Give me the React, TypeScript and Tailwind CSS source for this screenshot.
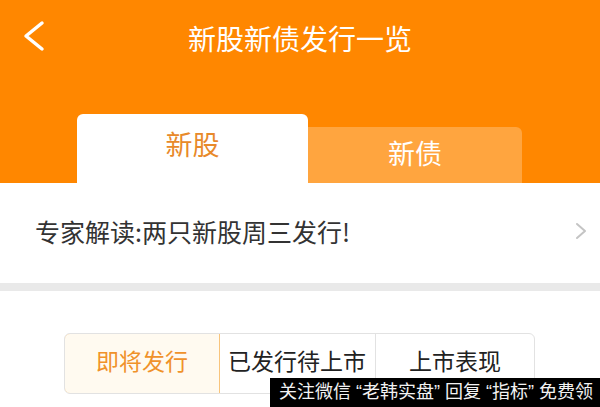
export default function App() {
  return (
    <div
      className="w-[600px] h-[407px] overflow-hidden bg-white relative"
      style={{ fontFamily: '"Noto Sans CJK SC", "Noto Sans", sans-serif' }}
    >
      {/* Orange header */}
      <div className="bg-[#ff8700] h-[183px] flex flex-col">
        <div className="h-[76px] flex items-center relative">
          <svg className="absolute left-[20px] top-[20px]" width="26" height="32" viewBox="0 0 26 32">
            <path d="M22 3 L6 16 L22 29" fill="none" stroke="#fff" strokeWidth="3.5" strokeLinecap="round" strokeLinejoin="round" />
          </svg>
          <div className="w-full text-center text-white text-[28px] leading-none">新股新债发行一览</div>
        </div>
        <div className="flex-1 flex items-end pl-[77px]">
          <div className="w-[231px] h-[69px] bg-white rounded-t-[6px] flex items-center justify-center text-[#e8892a] text-[27px] leading-none pb-[10px]">
            新股
          </div>
          <div className="w-[214px] h-[56px] bg-[#ffa53f] rounded-tr-[6px] flex items-center justify-center text-white text-[27px] leading-none pb-[5px]">
            新债
          </div>
        </div>
      </div>

      {/* News row */}
      <div className="h-[100px] flex items-center justify-between pl-[35px] pr-[12px] pb-[4px]">
        <span className="text-[#333] text-[25px] leading-none">专家解读:两只新股周三发行!</span>
        <svg width="14" height="20" viewBox="0 0 14 20">
          <path d="M3 3 L11 10 L3 17" fill="none" stroke="#c4c4c4" strokeWidth="2" strokeLinecap="round" strokeLinejoin="round" />
        </svg>
      </div>

      <div className="h-[8px] bg-[#e9e9e9]" />

      {/* Segmented control */}
      <div className="pt-[42px] pl-[64px]">
        <div className="w-[471px] h-[61px] flex rounded-[6px] border border-[#e2e2e2] overflow-hidden">
          <div className="w-[156px] flex items-center justify-center bg-[#fffaf0] border border-[#f8c47c] rounded-l-[6px] text-[#f0922a] text-[23px] leading-none pb-[6px] -m-px">
            即将发行
          </div>
          <div className="w-[157px] flex items-center justify-center border-r border-[#e2e2e2] text-[#222] text-[23px] leading-none pb-[6px]">
            已发行待上市
          </div>
          <div className="flex-1 flex items-center justify-center text-[#222] text-[23px] leading-none pb-[6px]">
            上市表现
          </div>
        </div>
      </div>

      {/* Watermark */}
      <div
        className="absolute left-[270px] top-[378px] w-[330px] h-[29px] bg-black text-[#f2f2f2] text-[18px] leading-[29px] pl-[9px] whitespace-nowrap"
        style={{ fontFamily: '"Liberation Sans", "Noto Sans CJK SC", sans-serif' }}
      >
        关注微信 “老韩实盘” 回复 “指标” 免费领
      </div>
    </div>
  );
}
